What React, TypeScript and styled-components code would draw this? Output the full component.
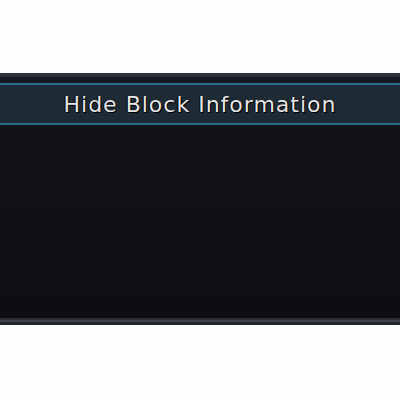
import React from 'react';
import styled, { createGlobalStyle } from 'styled-components';

const GlobalStyle = createGlobalStyle`
  html, body {
    margin: 0;
    padding: 0;
    background: #fdfdfd;
  }
  body {
    width: 400px;
    height: 400px;
    overflow: hidden;
  }
`;

export default function App() {
  return (
    <>
      <GlobalStyle />
      <Page>
        <Panel>
          <TopEdge />
          <Header>
            <Title>Hide Block Information</Title>
          </Header>
          <Body />
          <BottomEdge />
        </Panel>
      </Page>
    </>
  );
}

const Page = styled.div`
  padding-top: 73px;
`;

const Panel = styled.div`
  display: flex;
  flex-direction: column;
  background: #111116;
`;

const TopEdge = styled.div`
  height: 10px;
  background: linear-gradient(
    to bottom,
    #2c3139 0px,
    #2c3139 4px,
    #17191e 4px,
    #17191e 10px
  );
`;

const Header = styled.div`
  height: 38px;
  display: flex;
  align-items: center;
  justify-content: center;
  background: #1f2b34;
  border-top: 2px solid #2d6b90;
  border-bottom: 2px solid #2d6b90;
  box-sizing: content-box;
`;

const Title = styled.span`
  font-family: 'DejaVu Sans', sans-serif;
  font-size: 22px;
  color: #e6e6e6;
  letter-spacing: 1px;
  text-shadow: 1px 1px 0 #000, -1px 0 0 #000;
`;

const Body = styled.div`
  height: 193px;
  background: linear-gradient(to bottom, #121217, #0e0e12);
`;

const BottomEdge = styled.div`
  height: 7px;
  background: linear-gradient(
    to bottom,
    #2a2e36 0px,
    #2a2e36 2px,
    #3c414b 2px,
    #3c414b 4px,
    #22262c 4px,
    #22262c 7px
  );
`;
